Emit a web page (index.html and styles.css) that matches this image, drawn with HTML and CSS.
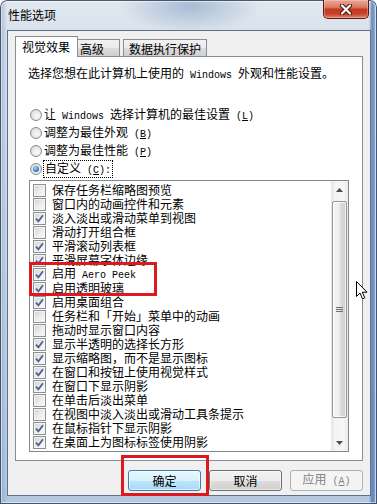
FILE: index.html
```html
<!DOCTYPE html>
<html lang="zh-CN">
<head>
<meta charset="utf-8">
<title>性能选项</title>
<link rel="stylesheet" href="styles.css">
</head>
<body>
<div class="window">
  <div class="titlebar">
    <span class="title">性能选项</span>
    <div class="close">
      <svg width="14" height="11" viewBox="0 0 14 11"><path d="M3 1.5 L11 9.5 M11 1.5 L3 9.5" stroke="#4a140c" stroke-width="4.2" stroke-linecap="round"/><path d="M3 1.5 L11 9.5 M11 1.5 L3 9.5" stroke="#ffffff" stroke-width="2.2" stroke-linecap="round"/></svg>
    </div>
  </div>
  <div class="client">
    <div class="tabs">
      <div class="tab active">视觉效果</div>
      <div class="tab t2">高级</div>
      <div class="tab t3">数据执行保护</div>
    </div>
    <div class="panel">
      <p class="intro">选择您想在此计算机上使用的<span class="lat"> Windows </span>外观和性能设置。</p>
      <div class="radios">
        <div class="radio"><span class="rb"></span><span class="lbl">让<span class="lat"> Windows </span>选择计算机的最佳设置<span class="lat"> (<u>L</u>)</span></span></div>
        <div class="radio"><span class="rb"></span><span class="lbl">调整为最佳外观<span class="lat"> (<u>B</u>)</span></span></div>
        <div class="radio"><span class="rb"></span><span class="lbl">调整为最佳性能<span class="lat"> (<u>P</u>)</span></span></div>
        <div class="radio"><span class="rb on"></span><span class="lbl focus">自定义<span class="lat"> (<u>C</u>):</span></span></div>
      </div>
      <div class="list">
        <div class="items">
          <div class="row"><span class="cb"></span><span class="lbl">保存任务栏缩略图预览</span></div>
          <div class="row"><span class="cb"></span><span class="lbl">窗口内的动画控件和元素</span></div>
          <div class="row"><span class="cb"><svg width="9" height="9" viewBox="0 0 9 9"><path d="M1 4.6 L3.4 7.3 L8 1.2" fill="none" stroke="#4b5f94" stroke-width="1.8"/></svg></span><span class="lbl">淡入淡出或滑动菜单到视图</span></div>
          <div class="row"><span class="cb"></span><span class="lbl">滑动打开组合框</span></div>
          <div class="row"><span class="cb"><svg width="9" height="9" viewBox="0 0 9 9"><path d="M1 4.6 L3.4 7.3 L8 1.2" fill="none" stroke="#4b5f94" stroke-width="1.8"/></svg></span><span class="lbl">平滑滚动列表框</span></div>
          <div class="row"><span class="cb"><svg width="9" height="9" viewBox="0 0 9 9"><path d="M1 4.6 L3.4 7.3 L8 1.2" fill="none" stroke="#4b5f94" stroke-width="1.8"/></svg></span><span class="lbl">平滑屏幕字体边缘</span></div>
          <div class="row"><span class="cb"><svg width="9" height="9" viewBox="0 0 9 9"><path d="M1 4.6 L3.4 7.3 L8 1.2" fill="none" stroke="#4b5f94" stroke-width="1.8"/></svg></span><span class="lbl">启用<span class="lat"> Aero Peek</span></span></div>
          <div class="row"><span class="cb"><svg width="9" height="9" viewBox="0 0 9 9"><path d="M1 4.6 L3.4 7.3 L8 1.2" fill="none" stroke="#4b5f94" stroke-width="1.8"/></svg></span><span class="lbl">启用透明玻璃</span></div>
          <div class="row"><span class="cb"><svg width="9" height="9" viewBox="0 0 9 9"><path d="M1 4.6 L3.4 7.3 L8 1.2" fill="none" stroke="#4b5f94" stroke-width="1.8"/></svg></span><span class="lbl">启用桌面组合</span></div>
          <div class="row"><span class="cb"></span><span class="lbl">任务栏和「开始」菜单中的动画</span></div>
          <div class="row"><span class="cb"></span><span class="lbl">拖动时显示窗口内容</span></div>
          <div class="row"><span class="cb"><svg width="9" height="9" viewBox="0 0 9 9"><path d="M1 4.6 L3.4 7.3 L8 1.2" fill="none" stroke="#4b5f94" stroke-width="1.8"/></svg></span><span class="lbl">显示半透明的选择长方形</span></div>
          <div class="row"><span class="cb"><svg width="9" height="9" viewBox="0 0 9 9"><path d="M1 4.6 L3.4 7.3 L8 1.2" fill="none" stroke="#4b5f94" stroke-width="1.8"/></svg></span><span class="lbl">显示缩略图，而不是显示图标</span></div>
          <div class="row"><span class="cb"><svg width="9" height="9" viewBox="0 0 9 9"><path d="M1 4.6 L3.4 7.3 L8 1.2" fill="none" stroke="#4b5f94" stroke-width="1.8"/></svg></span><span class="lbl">在窗口和按钮上使用视觉样式</span></div>
          <div class="row"><span class="cb"><svg width="9" height="9" viewBox="0 0 9 9"><path d="M1 4.6 L3.4 7.3 L8 1.2" fill="none" stroke="#4b5f94" stroke-width="1.8"/></svg></span><span class="lbl">在窗口下显示阴影</span></div>
          <div class="row"><span class="cb"></span><span class="lbl">在单击后淡出菜单</span></div>
          <div class="row"><span class="cb"></span><span class="lbl">在视图中淡入淡出或滑动工具条提示</span></div>
          <div class="row"><span class="cb"><svg width="9" height="9" viewBox="0 0 9 9"><path d="M1 4.6 L3.4 7.3 L8 1.2" fill="none" stroke="#4b5f94" stroke-width="1.8"/></svg></span><span class="lbl">在鼠标指针下显示阴影</span></div>
          <div class="row"><span class="cb"><svg width="9" height="9" viewBox="0 0 9 9"><path d="M1 4.6 L3.4 7.3 L8 1.2" fill="none" stroke="#4b5f94" stroke-width="1.8"/></svg></span><span class="lbl">在桌面上为图标标签使用阴影</span></div>
        </div>
        <div class="sb">
          <div class="arr"><svg width="7" height="4" viewBox="0 0 7 4"><path d="M0 4 L3.5 0 L7 4 Z" fill="#4d4d4d"/></svg></div>
          <div class="gap"></div>
          <div class="thumb"><svg width="7" height="7" viewBox="0 0 7 7"><path d="M0 1.5 H7 M0 3.5 H7 M0 5.5 H7" stroke="#6e6e6e" stroke-width="1"/></svg></div>
          <div class="track"></div>
          <div class="arr"><svg width="7" height="4" viewBox="0 0 7 4"><path d="M0 0 L3.5 4 L7 0 Z" fill="#4d4d4d"/></svg></div>
        </div>
      </div>
    </div>
    <div class="buttons">
      <div class="btn default">确定</div>
      <div class="btn">取消</div>
      <div class="btn disabled"><span class="lbl">应用<span class="lat"> (<u>A</u>)</span></span></div>
    </div>
  </div>
  <div class="mark mark-list"></div>
  <div class="mark mark-ok"></div>
  <svg class="cursor" width="12" height="19" viewBox="0 0 12 19"><path d="M0.5 0.5 L0.5 15.5 L4 12 L6.5 17.8 L8.8 16.8 L6.3 11.2 L11 11.2 Z" fill="#ffffff" stroke="#000000" stroke-width="1" stroke-linejoin="miter"/></svg>
</div>
</body>
</html>
```
FILE: styles.css
```css
* { box-sizing: border-box; margin: 0; padding: 0; }
html, body { width: 377px; height: 504px; overflow: hidden; background: #ffffff; }
body {
  font-family: "Noto Sans CJK SC", "Noto Sans", sans-serif;
  font-size: 12px;
  line-height: 14px;
  color: #000000;
}
.lat { font-family: "Liberation Mono", monospace; font-size: 10px; white-space: pre; }
u { text-decoration: underline; }
.lbl { white-space: nowrap; }

.window {
  position: relative;
  width: 377px;
  height: 504px;
  padding: 0 6px 8px 7px;
  display: flex;
  flex-direction: column;
  border-radius: 7px 7px 0 0;
  background:
    radial-gradient(ellipse 70px 26px at 190px 6px, rgba(100, 135, 180, 0.45), rgba(100, 135, 180, 0)),
    linear-gradient(90deg, rgba(120, 155, 200, 0.6) 0, rgba(120, 155, 200, 0) 7px, rgba(255, 255, 255, 0) calc(100% - 8px), rgba(60, 100, 170, 0.7) calc(100% - 5px), rgba(80, 120, 185, 0.55) calc(100% - 2px), rgba(255, 255, 255, 0) 100%),
    linear-gradient(180deg, #e1e8ef 0, #d9e2ec 30px, #c6d6e6 60%, #b2c8df 100%);
  box-shadow: inset 0 0 0 1px rgba(35, 50, 75, 0.8), inset 0 0 0 2px rgba(255, 255, 255, 0.5);
}

.titlebar {
  height: 30px;
  flex: none;
  display: flex;
  justify-content: space-between;
  align-items: flex-start;
}
.title { padding: 8px 0 0 1px; line-height: 14px; }
.close {
  width: 46px;
  height: 19px;
  margin-right: 2px;
  border: 1px solid #5a1b12;
  border-top: none;
  border-radius: 0 0 5px 5px;
  background: linear-gradient(180deg, #eaa897 0, #db7a64 40%, #c43820 52%, #c9432b 78%, #e3876d 100%);
  box-shadow: inset 0 0 0 1px rgba(255, 220, 210, 0.35);
  display: flex;
  align-items: center;
  justify-content: center;
}

.client {
  flex: 1;
  background: #f0f0f0;
  border: 1px solid #5f7189;
  padding: 5px 7px 4px 7px;
  display: flex;
  flex-direction: column;
}

.tabs { height: 20px; flex: none; display: flex; align-items: flex-end; }
.tab {
  height: 17px;
  border: 1px solid #898c95;
  border-bottom: none;
  padding: 2px 0 0 0;
  line-height: 14px;
  background: linear-gradient(180deg, #f2f2f2 0, #ebebeb 50%, #dddddd 51%, #cfcfcf 100%);
  white-space: nowrap;
}
.tab.active {
  position: relative;
  z-index: 1;
  height: 21px;
  width: 63px;
  padding: 3px 0 0 6px;
  margin-bottom: -1px;
  background: #ffffff;
}
.tab.t2 { width: 42px; padding-left: 2px; border-left: none; }
.tab.t3 { width: 84px; padding-left: 5px; margin-left: 3px; }

.panel {
  height: 405px;
  flex: none;
  background: #ffffff;
  border: 1px solid #898c95;
  padding: 9px 12px 0 12px;
}
.intro { white-space: nowrap; }
.radios { margin-top: 23px; }
.radio { height: 18px; display: flex; align-items: center; white-space: nowrap; }
.rb {
  width: 12px;
  height: 12px;
  flex: none;
  margin: 0 2px 0 2px;
  border-radius: 50%;
  border: 1px solid #8b8b8b;
  background: radial-gradient(circle at 60% 60%, #fbfbfb 0, #e6e6e6 55%, #cfcfcf 100%);
  display: flex;
  align-items: center;
  justify-content: center;
}
.rb.on::after {
  content: "";
  width: 6px;
  height: 6px;
  border-radius: 50%;
  background: radial-gradient(circle at 40% 35%, #b4dcf8 0, #3a7fcf 55%, #1b4f98 100%);
}
.focus { outline: 1px dotted #000000; padding: 0 1px; line-height: 13px; }

.list {
  margin: 2px 0 0 1px;
  width: 320px;
  height: 272px;
  border: 1px solid #828790;
  display: flex;
  background: #ffffff;
}
.items { flex: 1; padding: 2px 0 0 3px; overflow: hidden; }
.row { height: 14px; display: flex; align-items: center; white-space: nowrap; }
.cb {
  width: 13px;
  height: 13px;
  flex: none;
  margin-right: 6px;
  border: 1px solid #8e8f8f;
  background: linear-gradient(135deg, #cfd2d6 0, #eceded 55%, #fbfbfb 100%);
  box-shadow: inset 0 0 0 1px #f4f4f4;
  display: flex;
  align-items: center;
  justify-content: center;
}

.sb {
  width: 17px;
  flex: none;
  display: flex;
  flex-direction: column;
  background: linear-gradient(90deg, #e6e6e6 0, #f4f4f4 25%, #f6f6f6 75%, #eaeaea 100%);
}
.arr { height: 17px; flex: none; display: flex; align-items: center; justify-content: center; }
.gap { height: 3px; flex: none; }
.thumb {
  height: 217px;
  flex: none;
  margin: 0 1px;
  border: 1px solid #979797;
  border-radius: 2px;
  background: linear-gradient(90deg, #f6f6f6 0, #ececec 50%, #dcdcdc 51%, #d0d0d0 100%);
  box-shadow: inset 0 0 0 1px rgba(255, 255, 255, 0.7);
  display: flex;
  align-items: center;
  justify-content: center;
}
.track { flex: 1; }

.buttons {
  margin-top: 9px;
  height: 21px;
  flex: none;
  display: flex;
  justify-content: flex-end;
  gap: 8px;
}
.btn {
  width: 73px;
  height: 21px;
  border: 1px solid #707070;
  border-radius: 3px;
  background: linear-gradient(180deg, #f2f2f2 0, #ebebeb 50%, #dddddd 51%, #cfcfcf 100%);
  box-shadow: inset 0 0 0 1px rgba(255, 255, 255, 0.6);
  display: flex;
  align-items: center;
  justify-content: center;
  white-space: nowrap;
}
.btn.default {
  border-color: #3c7fb1;
  background: linear-gradient(180deg, #eaf6fd 0, #d9f0fc 50%, #bee6fd 51%, #a7d9f5 100%);
}
.btn.disabled {
  border-color: #adb2b5;
  background: #f4f4f4;
  color: #838383;
  box-shadow: none;
}

.mark { position: absolute; border: 3px solid #db1a20; }
.mark-list { left: 29px; top: 262px; width: 128px; height: 34px; }
.mark-ok { left: 121px; top: 455px; width: 88px; height: 41px; }
.cursor { position: absolute; left: 356px; top: 281px; }
```
